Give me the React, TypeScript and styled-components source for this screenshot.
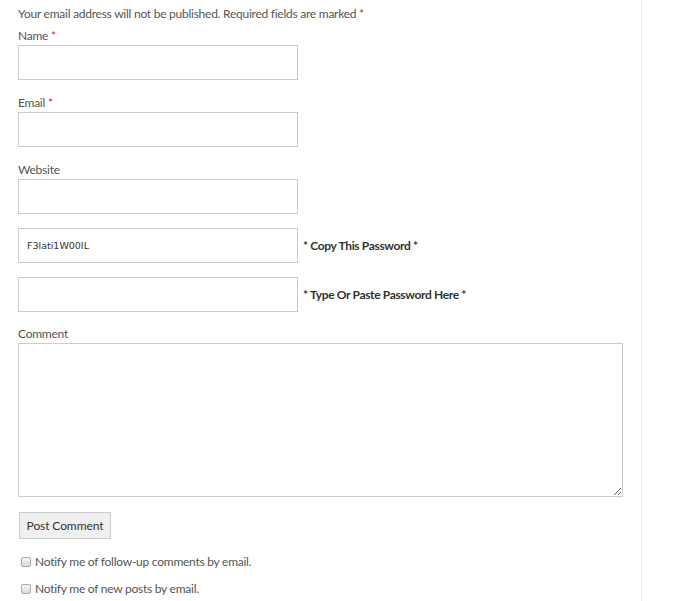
import React from "react";
import styled, { createGlobalStyle } from "styled-components";

const Global = createGlobalStyle`
  html, body { margin: 0; padding: 0; background: #fff; }
  body { font-family: Lato, "Open Sans", "Liberation Sans", sans-serif; }
`;

const Page = styled.div`
  display: flex;
  width: 699px;
  height: 601px;
  overflow: hidden;
`;

const Main = styled.div`
  width: 642px;
  flex: none;
  border-right: 1px solid #eeeeee;
  box-sizing: border-box;
  padding: 5px 0 0 18px;
`;

const Form = styled.form`
  display: flex;
  flex-direction: column;
  color: #555;
  font-size: 12px;
  letter-spacing: -0.25px;
`;

const Notes = styled.p`
  margin: 0 0 4px;
  line-height: 18px;
`;

const Req = styled.span`
  color: #e8193c;
`;

const Field = styled.div<{ $gap?: number }>`
  display: flex;
  flex-direction: column;
  margin-bottom: ${(p) => p.$gap ?? 14}px;
`;

const Label = styled.label`
  line-height: 18px;
`;

const Input = styled.input`
  box-sizing: border-box;
  width: 280px;
  height: 35px;
  border: 1px solid #cccccc;
  padding: 0 8px;
  font-family: "DejaVu Sans", sans-serif;
  font-size: 9.5px;
  letter-spacing: 0;
  color: #333;
  background: #fff;
  outline: none;
`;

const Row = styled.div<{ $gap?: number }>`
  display: flex;
  align-items: center;
  gap: 5px;
  margin-bottom: ${(p) => p.$gap ?? 14}px;
`;

const RowLabel = styled.label`
  font-weight: 700;
  color: #333;
  letter-spacing: -0.35px;
`;

const TextArea = styled.textarea`
  box-sizing: border-box;
  width: 605px;
  height: 154px;
  border: 1px solid #cccccc;
  padding: 6px 8px;
  font-family: inherit;
  outline: none;
`;

const Submit = styled.button`
  align-self: flex-start;
  margin: 15px 0 0 1px;
  box-sizing: border-box;
  width: 92px;
  height: 27px;
  border: 1px solid #cccccc;
  background: #efefef;
  color: #333;
  font-family: inherit;
  font-size: 12px;
  letter-spacing: -0.1px;
  padding: 0;
`;

const Checks = styled.div`
  display: flex;
  flex-direction: column;
  gap: 9px;
  margin-top: 14px;
`;

const CheckRow = styled.label`
  display: flex;
  align-items: center;
  gap: 4px;
  line-height: 18px;
  padding-left: 3px;
`;

const Box = styled.input`
  appearance: none;
  margin: 0;
  width: 10px;
  height: 10px;
  border: 1px solid #a9a9a9;
  border-radius: 2px;
  background: linear-gradient(#f4f4f4, #dcdcdc);
  box-sizing: border-box;
`;

export default function App() {
  return (
    <Page>
      <Global />
      <Main>
        <Form onSubmit={(e) => e.preventDefault()}>
          <Notes>
            Your email address will not be published. Required fields are marked <Req>*</Req>
          </Notes>
          <Field>
            <Label>
              Name <Req>*</Req>
            </Label>
            <Input type="text" />
          </Field>
          <Field>
            <Label>
              Email <Req>*</Req>
            </Label>
            <Input type="text" />
          </Field>
          <Field>
            <Label>Website</Label>
            <Input type="text" />
          </Field>
          <Row>
            <Input type="text" defaultValue="F3lati1W00IL" readOnly />
            <RowLabel>* Copy This Password *</RowLabel>
          </Row>
          <Row $gap={13}>
            <Input type="text" />
            <RowLabel>* Type Or Paste Password Here *</RowLabel>
          </Row>
          <Field $gap={0}>
            <Label>Comment</Label>
            <TextArea />
          </Field>
          <Submit type="submit">Post Comment</Submit>
          <Checks>
            <CheckRow>
              <Box type="checkbox" />
              Notify me of follow-up comments by email.
            </CheckRow>
            <CheckRow>
              <Box type="checkbox" />
              Notify me of new posts by email.
            </CheckRow>
          </Checks>
        </Form>
      </Main>
    </Page>
  );
}
